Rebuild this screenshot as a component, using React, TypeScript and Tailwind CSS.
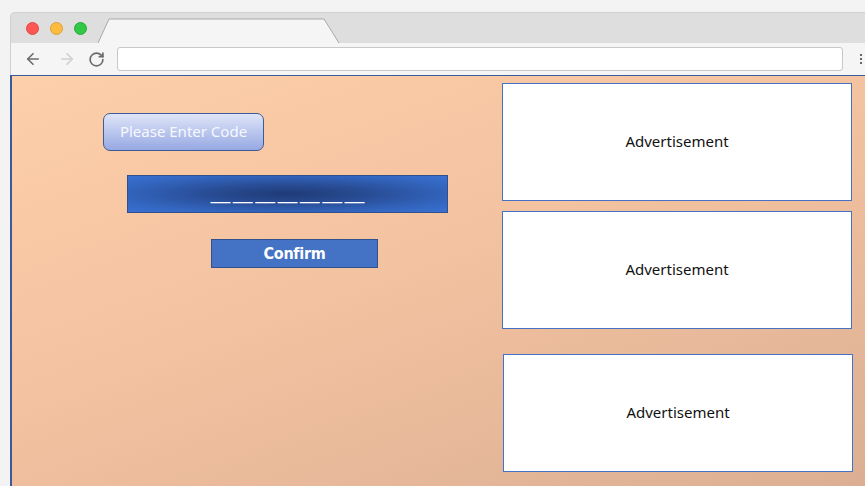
import { ArrowLeft, ArrowRight, RotateCw } from "lucide-react";

function AdBox({ className = "" }: { className?: string }) {
  return (
    <div
      className={`flex h-[118px] w-[350px] items-center justify-center border-[1.5px] border-[#4472c4] bg-white pb-[2px] text-[15px] text-[#111] ${className}`}
    >
      Advertisement
    </div>
  );
}

function BrowserChrome() {
  return (
    <div>
      <div className="flex h-[31px] items-center rounded-tl-[5px] border-l border-t border-[#d0d0d0] bg-[#dedede]">
        <div className="ml-[15px] flex gap-[11px]">
          <span className="h-[13px] w-[13px] rounded-full bg-[#fc5753] border border-[#df4744]" />
          <span className="h-[13px] w-[13px] rounded-full bg-[#fdbc40] border border-[#de9f34]" />
          <span className="h-[13px] w-[13px] rounded-full bg-[#33c748] border border-[#27aa35]" />
        </div>
        <svg className="ml-[11px] self-end" width="245" height="25" viewBox="0 0 245 25">
          <path d="M0 25 L11 1 L226 1 L241 25 Z" fill="#f5f5f5" />
          <path d="M0 25 L11 1 L226 1 L241 25" fill="none" stroke="#a9a9a9" strokeWidth="1" />
        </svg>
      </div>
      <div className="flex h-[32px] items-center border-l border-[#d0d0d0] bg-[#f5f5f5]">
        <ArrowLeft className="ml-[13px] h-[18px] w-[18px] text-[#6b6b6b]" strokeWidth={2.2} />
        <ArrowRight className="ml-[16px] h-[18px] w-[18px] text-[#cfcfcf]" strokeWidth={2.2} />
        <RotateCw className="ml-[12px] h-[17px] w-[17px] text-[#6b6b6b]" strokeWidth={2.4} />
        <div className="ml-[12px] h-[24px] w-[726px] rounded-[3px] border border-[#c8c8c8] bg-white" />
        <div className="ml-[17px] flex flex-col gap-[2px]">
          <span className="h-[2px] w-[2px] bg-[#666]" />
          <span className="h-[2px] w-[2px] bg-[#666]" />
          <span className="h-[2px] w-[2px] bg-[#666]" />
        </div>
      </div>
    </div>
  );
}

export default function App() {
  return (
    <div className="h-[486px] w-[865px] overflow-hidden bg-[#f3f3f3] pl-[10px] pt-[12px] font-['Noto_Sans',sans-serif]">
      <BrowserChrome />
      <div className="flex h-[420px] border-l-2 border-t border-[#3b5a99] bg-[linear-gradient(160deg,#fecfab_0%,#f3c2a0_45%,#dbae93_100%)]">
        <div className="flex w-[490px] flex-col">
          <div className="ml-[91px] mt-[37px] flex h-[38px] w-[161px] items-center justify-center rounded-[7px] border border-[#3e5b98] bg-[linear-gradient(180deg,#dfe5f8_0%,#b6c3ec_55%,#97a9e2_100%)] pb-[2px] text-[15px] text-[#f7f8ff]">
            Please Enter Code
          </div>
          <div className="ml-[115px] mt-[24px] flex h-[38px] w-[321px] items-end justify-center border border-[#2f4f8f] bg-[radial-gradient(ellipse_at_center,#1f3b76_0%,#27498f_30%,#3366c0_75%,#3a70d2_100%)] pb-[10px]">
            <span className="font-['Liberation_Sans',sans-serif] text-[17.5px] leading-none [word-spacing:-2px] text-white">
              __ __ __ __ __ __ __
            </span>
          </div>
          <div className="ml-[199px] mt-[26px] flex h-[29px] w-[167px] items-center justify-center border border-[#2f528f] bg-[#4472c4] font-['DejaVu_Sans_Condensed','DejaVu_Sans',sans-serif] text-[16px] font-bold tracking-[-0.3px] text-white">
            Confirm
          </div>
        </div>
        <div className="flex flex-col pt-[7px]">
          <AdBox />
          <AdBox className="mt-[10px]" />
          <AdBox className="ml-[1px] mt-[25px]" />
        </div>
      </div>
    </div>
  );
}
